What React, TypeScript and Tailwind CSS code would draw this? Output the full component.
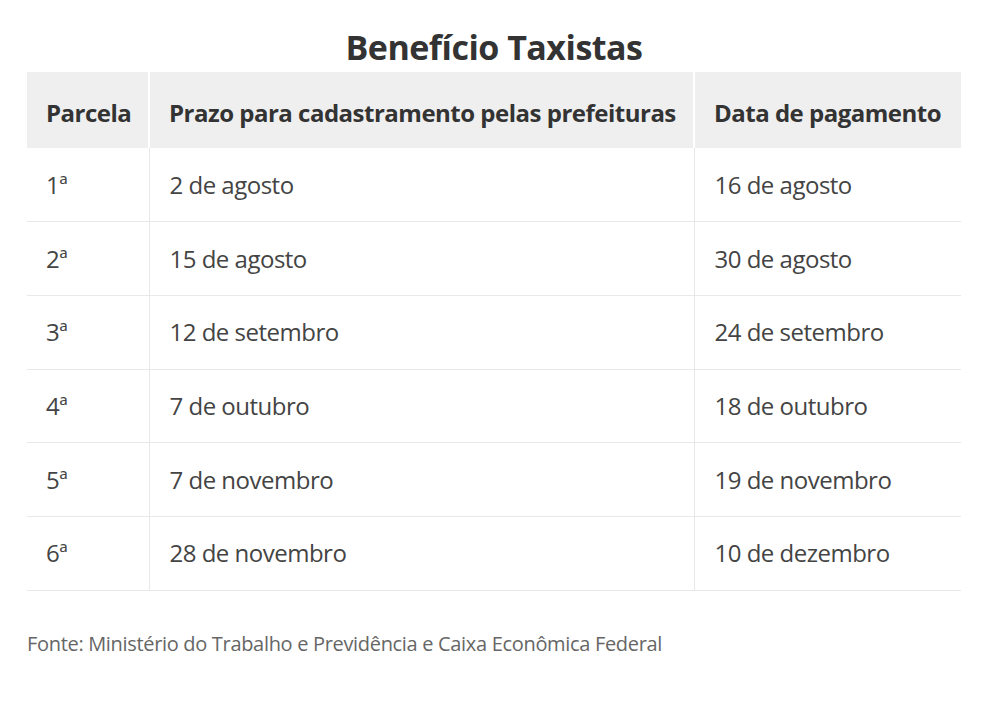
const rows = [
  ["1ª", "2 de agosto", "16 de agosto"],
  ["2ª", "15 de agosto", "30 de agosto"],
  ["3ª", "12 de setembro", "24 de setembro"],
  ["4ª", "7 de outubro", "18 de outubro"],
  ["5ª", "7 de novembro", "19 de novembro"],
  ["6ª", "28 de novembro", "10 de dezembro"],
];

export default function App() {
  return (
    <div className="min-h-[701px] w-[984px] bg-white pl-[27px] pt-[24px] font-['Open_Sans',sans-serif]">
      <div className="w-[934px]">
        <h1 className="text-center text-[34px] font-bold leading-[46px] tracking-[-0.5px] text-[#333]">
          Benefício Taxistas
        </h1>
        <table className="mt-[2px] w-[934px] table-fixed border-collapse">
          <colgroup>
            <col className="w-[122px]" />
            <col className="w-[545px]" />
            <col className="w-[267px]" />
          </colgroup>
          <thead>
            <tr className="h-[76px] bg-[#efefef] text-left text-[24px] font-bold tracking-[-0.5px] text-[#333]">
              <th className="pl-[19px] pt-[5px] font-bold">Parcela</th>
              <th className="border-l-2 border-white pl-[19px] pt-[5px] font-bold">
                Prazo para cadastramento pelas prefeituras
              </th>
              <th className="border-l-2 border-white pl-[19px] pt-[5px] font-bold">
                Data de pagamento
              </th>
            </tr>
          </thead>
          <tbody>
            {rows.map((r) => (
              <tr
                key={r[0]}
                className="h-[73.7px] border-b border-[#e8e8e8] text-[24px] tracking-[-0.5px] text-[#444]"
              >
                <td className="pl-[19px]">{r[0]}</td>
                <td className="border-l border-[#e8e8e8] pl-[20px]">{r[1]}</td>
                <td className="border-l border-[#e8e8e8] pl-[20px]">{r[2]}</td>
              </tr>
            ))}
          </tbody>
        </table>
        <p className="mt-[38px] text-[20px] tracking-[-0.32px] text-[#666]">
          Fonte: Ministério do Trabalho e Previdência e Caixa Econômica Federal
        </p>
      </div>
    </div>
  );
}
